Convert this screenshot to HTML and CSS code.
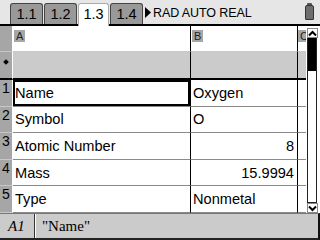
FILE: index.html
```html
<!DOCTYPE html>
<html>
<head>
<meta charset="utf-8">
<link rel="stylesheet" href="styles.css">
</head>
<body>
<div class="screen">
  <div class="topbar">
    <div class="tabs">
      <div class="tab">1.1</div>
      <div class="tab">1.2</div>
      <div class="tab active">1.3</div>
      <div class="tab">1.4</div>
    </div>
    <svg class="tri" width="6" height="11" viewBox="0 0 6 11"><path d="M0 0 L6 5.5 L0 11 Z" fill="#000"/></svg>
    <span class="mode">RAD AUTO REAL</span>
    <span class="battery"><span class="nub"></span></span>
  </div>
  <div class="sheet">
    <div class="grid">
      <div class="rh hdr"></div>
      <div class="ch ca"><span class="tag">A</span></div>
      <div class="ch cb"><span class="tag">B</span></div>
      <div class="ch cc"><span class="tag">C</span></div>

      <div class="rh frm"><span class="diamond"></span></div>
      <div class="fc ca"></div>
      <div class="fc cb"></div>
      <div class="fc cc"></div>

      <div class="rh num">1</div>
      <div class="cell ca sel">Name</div>
      <div class="cell cb">Oxygen</div>
      <div class="cell cc"></div>

      <div class="rh num">2</div>
      <div class="cell ca">Symbol</div>
      <div class="cell cb">O</div>
      <div class="cell cc"></div>

      <div class="rh num">3</div>
      <div class="cell ca">Atomic Number</div>
      <div class="cell cb right">8</div>
      <div class="cell cc"></div>

      <div class="rh num">4</div>
      <div class="cell ca">Mass</div>
      <div class="cell cb right">15.9994</div>
      <div class="cell cc"></div>

      <div class="rh num">5</div>
      <div class="cell ca">Type</div>
      <div class="cell cb">Nonmetal</div>
      <div class="cell cc"></div>
    </div>
    <div class="scroll">
      <div class="sbtn"><svg width="9" height="7" viewBox="0 0 9 7"><path d="M1 5.5 L4.5 2 L8 5.5" fill="none" stroke="#000" stroke-width="2"/></svg></div>
      <div class="track"><div class="thumb"></div></div>
      <div class="sbtn"><svg width="9" height="7" viewBox="0 0 9 7"><path d="M1 1.5 L4.5 5 L8 1.5" fill="none" stroke="#000" stroke-width="2"/></svg></div>
    </div>
  </div>
  <div class="entry">
    <div class="ref">A1</div>
    <div class="val">"Name"</div>
  </div>
</div>
</body>
</html>
```

FILE: styles.css
```css
html, body {
  margin: 0;
  padding: 0;
  background: #fff;
}
.screen {
  width: 320px;
  height: 240px;
  overflow: hidden;
  display: flex;
  flex-direction: column;
  font-family: "Liberation Sans", Arial, sans-serif;
  color: #000;
}
.topbar {
  height: 24px;
  flex: none;
  background: #e6e6e6;
  border-bottom: 2px solid #000;
  display: flex;
  align-items: flex-end;
  padding-left: 10px;
  position: relative;
}
.tabs {
  display: flex;
  gap: 1px;
  height: 21px;
}
.tab {
  width: 31px;
  height: 20px;
  background: #999;
  border: 1px solid #444;
  border-bottom: none;
  border-radius: 3px 3px 0 0;
  font-size: 14.5px;
  line-height: 21px;
  text-align: center;
  color: #000;
}
.tab.active {
  width: 29px;
  background: #fff;
  border-color: #aaa;
  height: 22px;
  margin-bottom: -2px;
  position: relative;
  z-index: 1;
}
.tri {
  margin: 0 2px 6px 2px;
  align-self: flex-end;
}
.mode {
  font-size: 12.5px;
  line-height: 22px;
  letter-spacing: -0.1px;
}
.battery {
  position: absolute;
  left: 305px;
  top: 5px;
  width: 7px;
  height: 13px;
  background: #6e6e6e;
  border: 1px solid #333;
  border-radius: 2px 2px 1px 1px;
}
.battery .nub {
  position: absolute;
  left: 1px;
  top: -3px;
  width: 5px;
  height: 2px;
  background: #555;
  border-radius: 1px 1px 0 0;
}
.sheet {
  flex: none;
  height: 187px;
  display: flex;
}
.grid {
  width: 306px;
  display: grid;
  grid-template-columns: 13px 178px 107px 8px;
  grid-template-rows: 26px 28px repeat(5, 1fr);
}
.rh {
  background: #a6a6a6;
  border-right: 1px solid #fff;
  border-bottom: 1px solid #c8c8c8;
}
.rh.frm {
  border-bottom: 2px solid #000;
  display: flex;
  align-items: center;
  justify-content: center;
}
.diamond {
  width: 4px;
  height: 4px;
  background: #000;
  transform: rotate(45deg);
  margin-right: 1px;
  margin-bottom: 6px;
}
.rh.num {
  font-size: 14px;
  line-height: 16px;
  padding: 0 0 0 2px;
}
.ch {
  background: #fff;
  border-bottom: 1px solid #c8c8c8;
}
.tag {
  display: inline-block;
  background: #a6a6a6;
  color: #222;
  font-size: 11px;
  line-height: 12px;
  height: 12px;
  padding: 0 2px;
  margin: 1px 0 0 1px;
}
.cc .tag {
  margin-left: 0;
  padding-right: 0;
}
.ca {
  border-right: 1px solid #000;
}
.cb {
  border-right: 1px solid #000;
}
.cc {
  overflow: hidden;
}
.fc {
  background: #cbcbcb;
  border-bottom: 2px solid #000;
}
.cell {
  background: #fff;
  border-bottom: 1px solid #8a8a8a;
  font-size: 14.6px;
  padding: 0 3px 0 2px;
  display: flex;
  align-items: center;
  white-space: nowrap;
}
.cell.right {
  justify-content: flex-end;
}
.cell.sel {
  box-shadow: inset 0 0 0 2px #000;
}
.scroll {
  width: 14px;
  display: flex;
  flex-direction: column;
  padding: 2px 0 0 1px;
  box-sizing: border-box;
}
.sbtn {
  width: 11px;
  height: 10px;
  border: 1px solid #888;
  box-sizing: border-box;
  display: flex;
  align-items: center;
  justify-content: center;
  background: #fff;
}
.track {
  flex: 1;
  width: 10px;
  border: 1px solid #222;
  border-top: none;
  box-sizing: border-box;
}
.thumb {
  height: 33px;
  background: #000;
}
.entry {
  flex: none;
  height: 27px;
  box-sizing: border-box;
  background: #cbcbcb;
  border-top: 1px solid #777;
  border-bottom: 2px solid #222;
  border-right: 2px solid #111;
  display: flex;
  font-family: "Liberation Serif", "Times New Roman", serif;
  font-size: 15px;
}
.ref {
  width: 35px;
  border-right: 1px solid #333;
  box-shadow: 1px 0 0 #fff;
  font-style: italic;
  padding-left: 8px;
  box-sizing: border-box;
  line-height: 24px;
}
.val {
  flex: 1;
  padding-left: 5px;
  margin-left: 2px;
  line-height: 24px;
}
```
